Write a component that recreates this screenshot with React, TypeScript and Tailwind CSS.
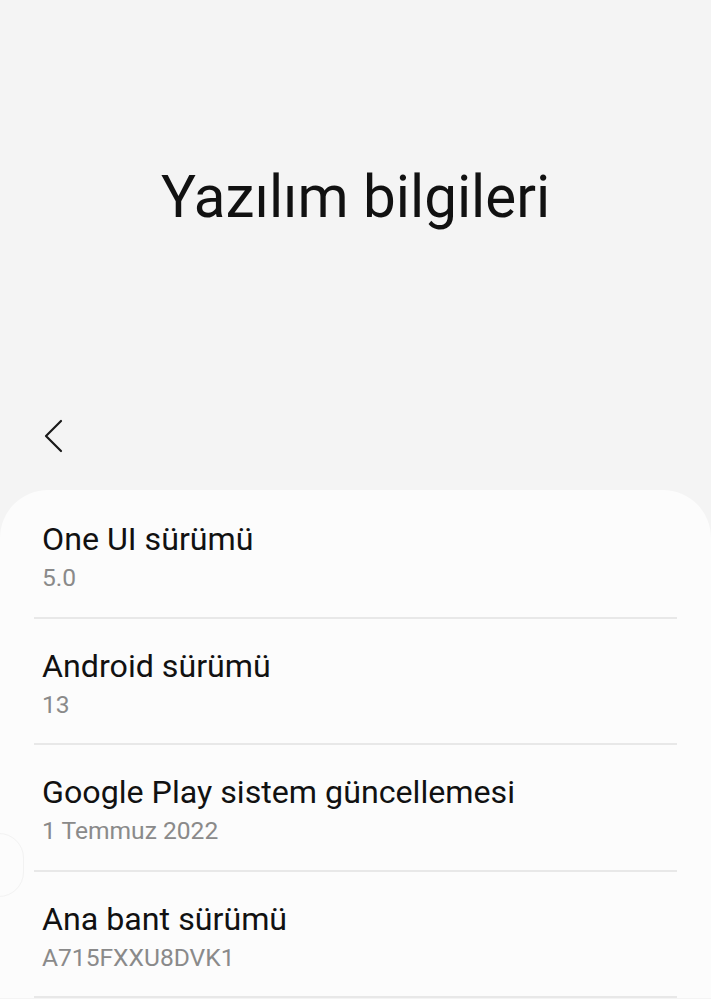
import React from "react";

const rows = [
  { title: "One UI sürümü", value: "5.0" },
  { title: "Android sürümü", value: "13" },
  { title: "Google Play sistem güncellemesi", value: "1 Temmuz 2022" },
  { title: "Ana bant sürümü", value: "A715FXXU8DVK1" },
];

export default function App() {
  return (
    <div
      className="relative w-[711px] h-[999px] overflow-hidden bg-[#f4f4f4]"
      style={{ fontFamily: "Roboto, 'Noto Sans', sans-serif" }}
    >
      <div className="h-[394px] flex items-center justify-center">
        <h1 className="text-[58.3px] leading-none text-[#111]">Yazılım bilgileri</h1>
      </div>
      <div className="h-[96px] flex items-start pl-[42px] pt-[24px]">
        <svg width="24" height="36" viewBox="0 0 24 36" fill="none">
          <path d="M19 3 L4 18 L19 33" stroke="#1a1a1a" strokeWidth="2.2" strokeLinecap="round" strokeLinejoin="round" />
        </svg>
      </div>
      <div className="bg-[#fcfcfc] rounded-t-[48px] px-[34px] pt-[2px]">
        {rows.map((r) => (
          <div key={r.title} className="h-[126.5px] flex flex-col border-b-2 border-[#e8e8e8]">
            <div className="pl-[8px] pt-[27px] text-[32.2px] leading-[40px] text-[#111]">{r.title}</div>
            <div className="pl-[8px] mt-[4px] text-[24.6px] leading-[30px] text-[#8a8a8a]">{r.value}</div>
          </div>
        ))}
      </div>
      <div className="absolute left-[-26px] top-[833px] w-[50px] h-[64px] rounded-full border border-[#f2f2f2]" />
    </div>
  );
}
